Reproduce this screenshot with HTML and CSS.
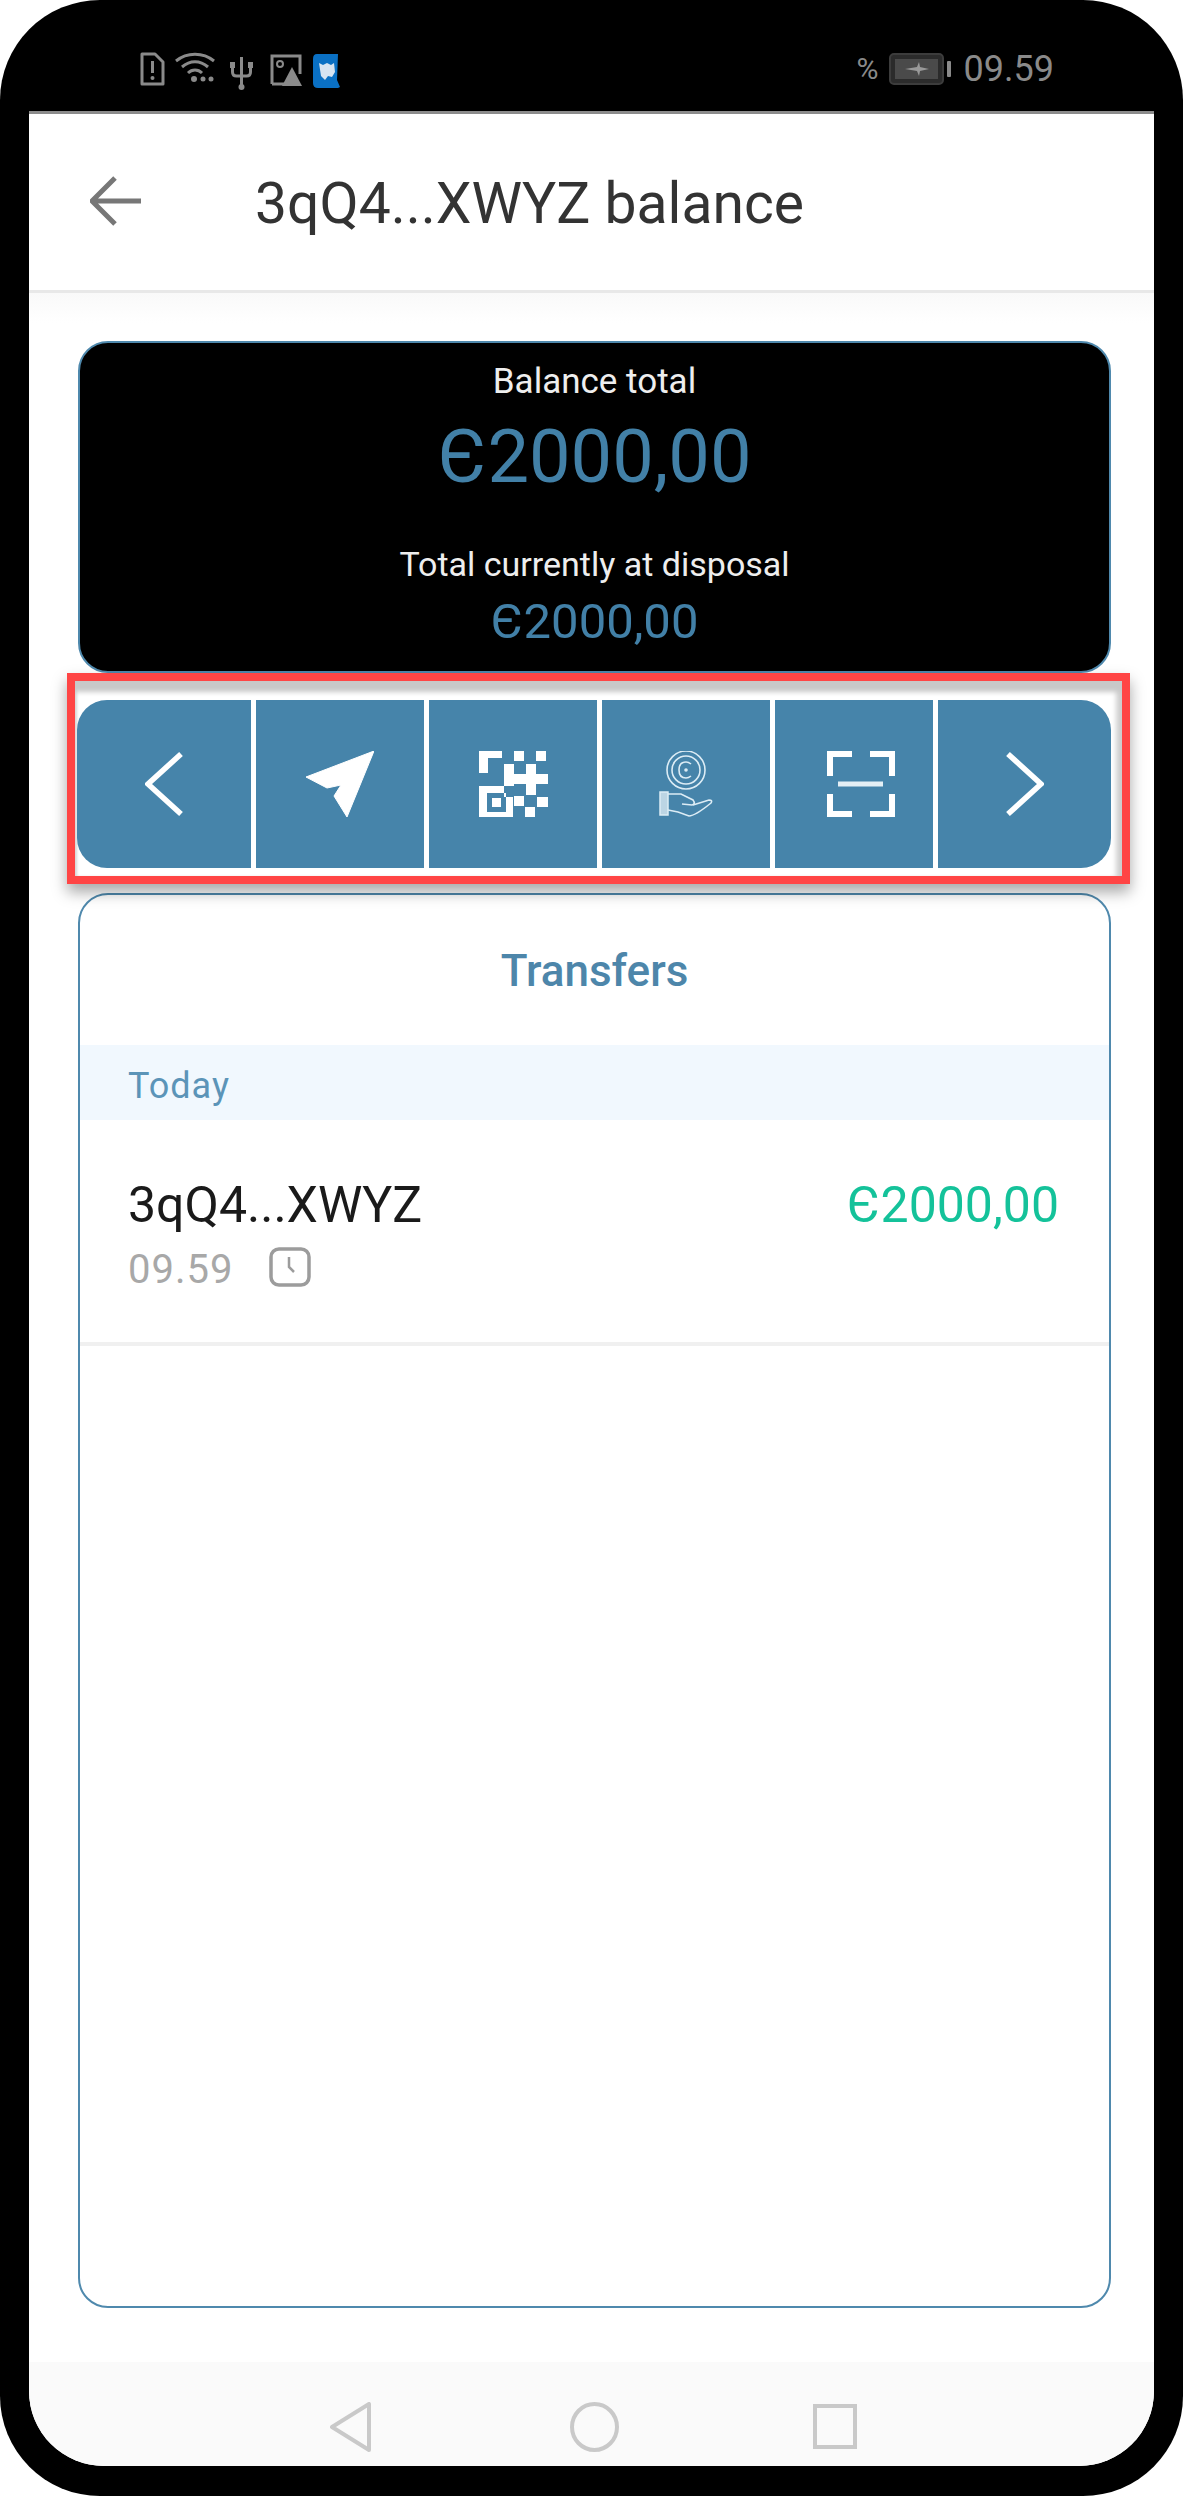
FILE: index.html
```html
<!DOCTYPE html>
<html lang="en">
<head>
<meta charset="utf-8">
<title>3qQ4...XWYZ balance</title>
<link rel="stylesheet" href="styles.css">
</head>
<body>
<div class="phone">
  <div class="status">
    <div class="status-left">
      <svg class="ic-sim" viewBox="0 0 25 34"><path d="M2 2h13l8 8v22H2z" fill="none" stroke="#8a8a8a" stroke-width="3" stroke-linejoin="round"/><path d="M12.500 9v12" stroke="#8a8a8a" stroke-width="3"/><circle cx="12.500" cy="26" r="2" fill="#8a8a8a"/></svg>
      <svg class="ic-wifi" viewBox="0 0 40 30"><g fill="none" stroke="#8a8a8a" stroke-width="3"><path d="M1 9C12 0 28 0 39 9"/><path d="M7 15C15 8 25 8 33 15"/><path d="M13 21C17 17 23 17 27 21"/></g><circle cx="19" cy="27" r="3" fill="#8a8a8a"/><circle cx="28" cy="27" r="2.500" fill="#8a8a8a"/><circle cx="36" cy="27" r="2.500" fill="#8a8a8a"/></svg>
      <svg class="ic-usb" viewBox="0 0 23 35"><g fill="none" stroke="#8a8a8a" stroke-width="3"><path d="M11.500 2v32"/><path d="M2.500 11v6q0 4 4 4h10q4 0 4-4v-6"/></g><circle cx="11.500" cy="32" r="3" fill="#8a8a8a"/><rect x="0" y="7" width="5" height="6" fill="#8a8a8a"/><rect x="18" y="7" width="5" height="6" fill="#8a8a8a"/></svg>
      <svg class="ic-pic" viewBox="0 0 32 32"><path d="M2 30V2h28v18" fill="none" stroke="#8a8a8a" stroke-width="3"/><path d="M2 30h12" stroke="#8a8a8a" stroke-width="3"/><circle cx="10" cy="10" r="3" fill="none" stroke="#8a8a8a" stroke-width="2"/><path d="M22 13l10 19H12z" fill="#8a8a8a"/></svg>
      <svg class="ic-app" viewBox="0 0 27 34"><path d="M4 0h21l-1 26 3 7-2 1H5q-5 0-5-5V5q0-5 4-5z" fill="#0a70c4"/><path d="M6 9l4 2 4-2 4 2 3-2 1 9-3 5-4-1-3 4-4-4z" fill="#d6e4f2"/></svg>
    </div>
    <div class="status-right">
      <span class="st-text pct">%</span>
      <svg class="ic-batt" viewBox="0 0 62 32"><rect x="1" y="1" width="53" height="30" rx="4" fill="#2b2b2b" stroke="#3c3c3c" stroke-width="2"/><rect x="6" y="6" width="43" height="20" fill="#4a4a4a"/><path d="M16 16l12-2 2-5 1 5 9 2-9 2-1 5-2-5z" fill="#999"/><rect x="58" y="8" width="4" height="16" rx="1" fill="#8a8a8a"/></svg>
      <span class="st-text">09.59</span>
    </div>
  </div>
  <div class="screen">
    <header class="appbar">
      <svg class="ic-back" viewBox="0 0 51 50"><path d="M25 2L2 25l23 23M2 25h49" fill="none" stroke="#777" stroke-width="5"/></svg>
      <h1 class="title">3qQ4...XWYZ balance</h1>
    </header>
    <main class="content">
      <section class="balance">
        <div class="bal-label first">Balance total</div>
        <div class="bal-big">Є2000,00</div>
        <div class="bal-label second">Total currently at disposal</div>
        <div class="bal-small">Є2000,00</div>
      </section>
      <div class="highlight">
        <nav class="actions">
          <div class="cell">
            <svg class="ic-chev" viewBox="0 0 38 66"><path d="M36 3L3 33l33 30" fill="none" stroke="#fff" stroke-width="5.500"/></svg>
          </div>
          <div class="cell">
            <svg class="ic-send" viewBox="0 0 68 66"><path d="M68 0L0 26l21 11 14-3-7 11 13 21z" fill="#fff" stroke="#fff" stroke-width="1" stroke-linejoin="round"/></svg>
          </div>
          <div class="cell">
            <svg class="ic-qr" viewBox="0 0 69 66" fill="#fff">
              <path d="M0 0h23v7H9v15H0z"/>
              <rect x="35" y="0" width="10" height="10"/>
              <rect x="57" y="0" width="10" height="10"/>
              <path d="M25 13h10v10h12V13h10v10h12v10H57v11H47V33H35v2H25z"/>
              <path fill-rule="evenodd" d="M0 35h25v11h9v20H0zM8 42v19h19V42z"/>
              <rect x="13" y="47" width="9" height="9"/>
              <rect x="35" y="45" width="10" height="10"/>
              <rect x="58" y="46" width="11" height="10"/>
              <rect x="46" y="56" width="10" height="10"/>
            </svg>
          </div>
          <div class="cell">
            <svg class="ic-coin" viewBox="0 0 54 66">
              <g fill="none" stroke="#dcecf5" stroke-width="1.600">
                <circle cx="27" cy="19" r="19"/>
                <circle cx="27" cy="19" r="14"/>
                <path d="M32 13q-2.500-2-5-2-7 0-7 8t7 8q2.500 0 5-2"/>
                <path d="M9 43l13 0 12 6q3 4-1 5l-10-1"/>
                <path d="M9 59l10 2 11 4q6 0 22-13 2-3-2-3l-16 5"/>
              </g>
              <rect x="1" y="41" width="8" height="23" fill="#bcd5e4" stroke="#dcecf5" stroke-width="1.500"/>
              <circle cx="27" cy="19" r="1.800" fill="#dcecf5"/>
            </svg>
          </div>
          <div class="cell cell-scan">
            <svg class="ic-scan" viewBox="0 0 68 66">
              <path d="M3 25V3h22M43 3h22v22M3 43v20h22M43 63h22V43" fill="none" stroke="#fff" stroke-width="6"/>
              <path d="M11 33h45" stroke="#e4eff5" stroke-width="5"/>
            </svg>
          </div>
          <div class="cell">
            <svg class="ic-chev" viewBox="0 0 38 66"><path d="M2 3l33 30L2 63" fill="none" stroke="#fff" stroke-width="5.500"/></svg>
          </div>
        </nav>
      </div>
      <section class="transfers">
        <h2 class="tr-title">Transfers</h2>
        <div class="tr-day">Today</div>
        <div class="tr-row">
          <div class="tr-main">
            <div class="tr-addr">3qQ4...XWYZ</div>
            <div class="tr-meta">
              <span class="tr-time">09.59</span>
              <svg class="ic-clock" viewBox="0 0 42 40"><rect x="2" y="2" width="38" height="36" rx="8" fill="none" stroke="#9c9c9c" stroke-width="3.500"/><path d="M20 10v10l5 5" fill="none" stroke="#9c9c9c" stroke-width="2.500"/></svg>
            </div>
          </div>
          <div class="tr-amount">Є2000,00</div>
        </div>
      </section>
    </main>
    <footer class="navbar">
      <svg class="ic-nav-back" viewBox="0 0 41 50"><path d="M39 2v46L2 25z" fill="none" stroke="#c9c9c9" stroke-width="4" stroke-linejoin="round"/></svg>
      <svg class="ic-nav-home" viewBox="0 0 49 50"><ellipse cx="24.500" cy="25" rx="22.500" ry="23" fill="none" stroke="#c9c9c9" stroke-width="4"/></svg>
      <svg class="ic-nav-rect" viewBox="0 0 44 45"><rect x="2" y="2" width="40" height="41" fill="none" stroke="#c9c9c9" stroke-width="4"/></svg>
    </footer>
  </div>
</div>
</body>
</html>
```

FILE: styles.css
```css
* { box-sizing: border-box; }
html, body { margin: 0; padding: 0; background: #fff; }
body { width: 1183px; height: 2496px; overflow: hidden; font-family: Roboto, "Liberation Sans", sans-serif; }
svg { display: block; flex: none; }

.phone { width: 1183px; height: 2496px; background: #000; border-radius: 100px; padding: 0 29px 30px 29px; display: flex; flex-direction: column; }

.status { height: 111px; flex: none; display: flex; justify-content: space-between; align-items: flex-start; padding: 52px 100px 0 111px; }
.status-left { display: flex; align-items: flex-start; }
.ic-sim { width: 25px; height: 34px; margin-right: 10px; }
.ic-wifi { width: 40px; height: 30px; margin-right: 15px; }
.ic-usb { width: 23px; height: 35px; margin-top: 3px; margin-right: 17px; }
.ic-pic { width: 32px; height: 32px; margin-top: 2px; margin-right: 11px; }
.ic-app { width: 27px; height: 34px; margin-top: 2px; }
.status-right { display: flex; align-items: center; height: 34px; }
.st-text { color: #8a8a8a; font-size: 36px; line-height: 34px; }
.pct { font-size: 30px; margin-right: 10px; }
.ic-batt { width: 62px; height: 32px; margin-right: 13px; }

.screen { flex: 1; background: #fff; border-top: 3px solid #8c8c8c; border-radius: 0 0 75px 75px; overflow: hidden; display: flex; flex-direction: column; min-height: 0; }

.appbar { height: 179px; flex: none; border-bottom: 3px solid #e8e8e8; display: flex; align-items: center; padding: 0 0 0 61px; }
.ic-back { width: 51px; height: 50px; margin-right: 114px; margin-top: -2px; }
.title { margin: 3px 0 0; font-size: 57px; font-weight: 400; color: #333; line-height: 60px; }

.content { flex: 1; min-height: 0; padding: 48px 43px 0 49px; background: linear-gradient(#f9f9f9, #fff 30px); display: flex; flex-direction: column; }

.balance { height: 332px; flex: none; background: #000; border: 2px solid #4f89ad; border-radius: 30px; color: #fff; text-align: center; display: flex; flex-direction: column; }
.bal-label { font-size: 35px; line-height: 40px; color: #eee; }
.bal-label.first { margin-top: 19px; }
.bal-big { font-size: 74px; line-height: 80px; color: #4280a7; margin-top: 15px; }
.bal-label.second { font-size: 34px; margin-top: 47px; }
.bal-small { font-size: 49px; line-height: 60px; color: #4280a7; margin-top: 8px; }

.highlight { position: relative; flex: none; margin: 0 -19px 9px -11px; height: 211px; border: 8px solid #ff4545; padding: 19px 11px 8px 2px; background: #fff; box-shadow: 0 8px 14px rgba(0,0,0,.35), inset 0 12px 5px -1px #c8c8c8, inset -9px 0 5px -3px #d0d0d0, inset 3px 0 3px -1px #ddd; }
.actions { display: grid; grid-template-columns: 174px 168px 168px 168px 158px 173px; gap: 5px; height: 168px; border-radius: 30px; overflow: hidden; }
.cell { background: #4684aa; display: flex; align-items: center; justify-content: center; }
.cell-scan { padding-left: 14px; }
.ic-chev { width: 38px; height: 66px; }
.ic-send { width: 68px; height: 66px; }
.ic-qr { width: 69px; height: 66px; }
.ic-coin { width: 54px; height: 66px; }
.ic-scan { width: 68px; height: 66px; }

.transfers { flex: none; height: 1415px; background: #fff; border: 2.500px solid #4f89ad; border-radius: 30px; overflow: hidden; }
.tr-title { margin: 0; height: 150px; padding-top: 51px; text-align: center; font-size: 44px; font-weight: 500; line-height: 50px; color: #4d86aa; }
.tr-day { height: 75px; background: #f1f8fe; padding: 0 0 0 48px; font-size: 36px; line-height: 83px; color: #5b94b8; letter-spacing: 1px; }
.tr-row { height: 226px; border-bottom: 4px solid #f0f0f0; display: flex; justify-content: space-between; padding: 57px 50px 0 48px; }
.tr-addr { font-size: 50px; line-height: 56px; color: #1a1a1a; }
.tr-meta { display: flex; align-items: center; margin-top: 11px; }
.tr-time { font-size: 40px; line-height: 40px; color: #a8a8a8; margin-right: 36px; padding-top: 6px; letter-spacing: 1px; }
.ic-clock { width: 42px; height: 40px; }
.tr-amount { font-size: 50px; line-height: 56px; color: #14c29a; }

.navbar { height: 104px; flex: none; background: #fafafa; display: flex; align-items: flex-start; padding: 40px 0 0 301px; }
.ic-nav-back { width: 41px; height: 50px; margin-right: 199px; }
.ic-nav-home { width: 49px; height: 50px; margin-right: 194px; }
.ic-nav-rect { width: 44px; height: 45px; margin-top: 2px; }
```
